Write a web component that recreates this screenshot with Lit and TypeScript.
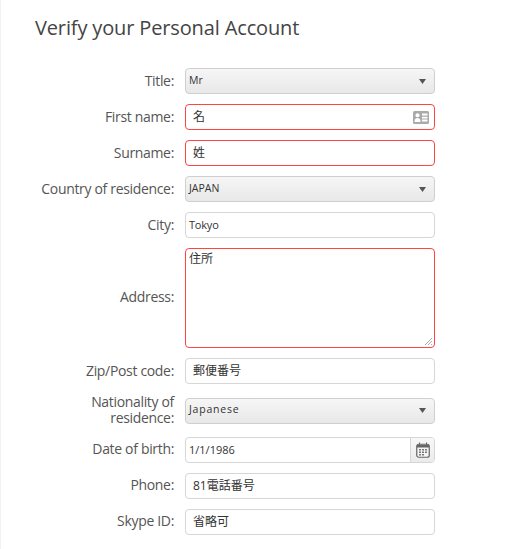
import { LitElement, html, css } from "lit";
import { customElement } from "lit/decorators.js";

const arrow = html`<svg class="arrow" width="7" height="5" viewBox="0 0 7 5"><path d="M0 0H7L3.5 5Z" fill="#555"/></svg>`;

@customElement("app-root")
export class AppRoot extends LitElement {
  static styles = css`
    :host { display: block; width: 516px; height: 549px; box-sizing: border-box; overflow: hidden; background: #fff;
      border-left: 1px solid #f2f2f2; font-family: "Open Sans", "Noto Sans CJK JP", sans-serif; color: #555; }
    h1 { margin: 0; padding: 14px 0 0 34px; font-size: 20px; line-height: 27px; font-weight: 400; color: #444; letter-spacing: -0.14px; }
    form { display: flex; flex-direction: column; gap: 10px; margin-top: 27px; }
    .row { display: grid; grid-template-columns: 173px 250px; column-gap: 11px; align-items: center; }
    .label { text-align: right; font-size: 14px; line-height: 16px; color: #555; letter-spacing: -0.33px; }
    .up { padding-bottom: 2px; }
    .tall { min-height: 33px; }
    .tall .label { padding-bottom: 1px; }
    .field { box-sizing: border-box; height: 26px; width: 250px; display: flex; align-items: center; justify-content: space-between;
      border: 1px solid #d6d6d6; border-radius: 4px; background: #fff; padding: 0 3px; font-size: 11px; color: #333; }
    .field span { padding-bottom: 2px; }
    .select { background: linear-gradient(#f6f6f6, #e8e8e8); border-color: #cfcfcf; padding-right: 8px; font-size: 10.5px; }
    .cjk { padding-left: 7px; font-size: 12px; }
    .error { border-color: #f44; }
    .area { height: 100px; align-items: flex-start; padding-top: 0; position: relative; font-size: 12px; }
    .grip { position: absolute; right: 1px; bottom: 1px; }
    .spaced { letter-spacing: 0.8px; }
    .spaced span { padding-bottom: 4px; }
    .tokyo { letter-spacing: -0.2px; }
    .date { padding-right: 0; }
    .cal { box-sizing: border-box; width: 24px; height: 24px; display: flex; align-items: center; justify-content: center;
      border-left: 1px solid #d6d6d6; background: linear-gradient(#f8f8f8, #ebebeb); border-radius: 0 3px 3px 0; }
    .card { margin-right: 2px; }
  `;

  render() {
    return html`
      <h1>Verify your Personal Account</h1>
      <form>
        <div class="row"><div class="label">Title:</div><div class="field select"><span>Mr</span>${arrow}</div></div>
        <div class="row"><div class="label">First name:</div><div class="field cjk error"><span>名</span>
          <svg class="card" width="16" height="13" viewBox="0 0 16 13">
            <rect width="16" height="13" rx="1.5" fill="#aaa"/>
            <circle cx="4.5" cy="4.2" r="2" fill="#fff"/>
            <path d="M1.5 11c0-3 1-4 3-4s3 1 3 4z" fill="#fff"/>
            <path d="M9 2.5h5.5v2H9zM9 5.8h5.5v1.6H9zM9 8.6h5.5v2H9z" fill="#fff"/>
          </svg></div></div>
        <div class="row"><div class="label">Surname:</div><div class="field cjk error"><span>姓</span></div></div>
        <div class="row"><div class="label">Country of residence:</div><div class="field select"><span>JAPAN</span>${arrow}</div></div>
        <div class="row"><div class="label">City:</div><div class="field"><span class="tokyo">Tokyo</span></div></div>
        <div class="row"><div class="label up">Address:</div><div class="field area error"><span>住所</span>
          <svg class="grip" width="9" height="9" viewBox="0 0 9 9"><path d="M1 8L8 1M4 8L8 4M7 8L8 7" stroke="#aaa" stroke-width="1"/></svg></div></div>
        <div class="row"><div class="label">Zip/Post code:</div><div class="field cjk"><span>郵便番号</span></div></div>
        <div class="row tall"><div class="label">Nationality of<br>residence:</div><div class="field select spaced"><span>Japanese</span>${arrow}</div></div>
        <div class="row"><div class="label up">Date of birth:</div><div class="field date"><span>1/1/1986</span>
          <div class="cal"><svg width="14" height="16" viewBox="0 0 14 16">
            <rect x="0.75" y="2.25" width="12.5" height="13" rx="2" fill="#f4f4f4" stroke="#666" stroke-width="1.2"/>
            <path d="M1 3h12v2.5H1z" fill="#666"/>
            <path d="M3.5 0.5v2.5M10.5 0.5v2.5" stroke="#666"/>
            <path d="M3 7h2v1.5H3zM6 7h2v1.5H6zM9 7h2v1.5H9zM3 9.5h2V11H3zM6 9.5h2V11H6zM9 9.5h2V11H9zM3 12h2v1.5H3zM6 12h2v1.5H6z" fill="#777"/>
          </svg></div></div></div>
        <div class="row"><div class="label up">Phone:</div><div class="field cjk"><span>81電話番号</span></div></div>
        <div class="row"><div class="label up">Skype ID:</div><div class="field cjk"><span>省略可</span></div></div>
      </form>
    `;
  }
}
